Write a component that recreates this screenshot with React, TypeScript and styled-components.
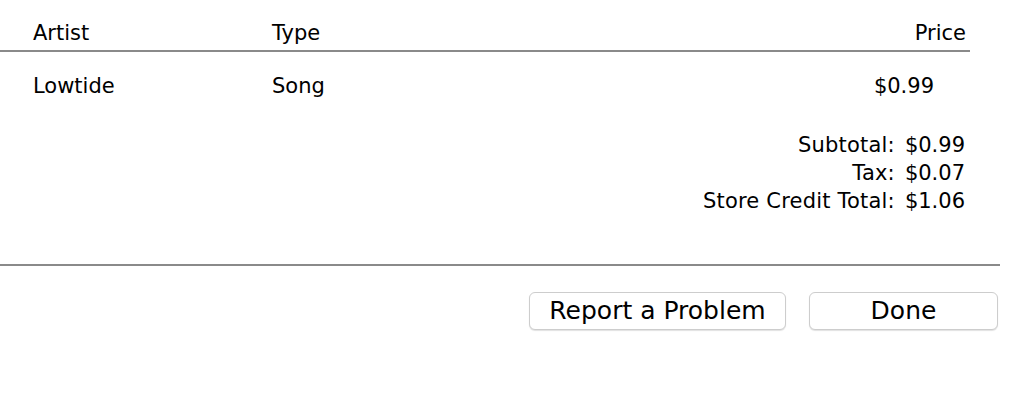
import React from "react";
import styled, { createGlobalStyle } from "styled-components";

const Global = createGlobalStyle`
  html, body { margin: 0; padding: 0; background: #ffffff; }
  body {
    font-family: "DejaVu Sans", "Verdana", sans-serif;
    color: #000000;
  }
`;

const Page = styled.div`
  width: 1026px;
  height: 400px;
  background: #ffffff;
  display: flex;
  flex-direction: column;
`;

const Table = styled.div`
  width: 970px;
  display: flex;
  flex-direction: column;
`;

const Row = styled.div<{ $header?: boolean }>`
  display: grid;
  grid-template-columns: 239px 1fr auto;
  padding: ${(p) => (p.$header ? "19px 4px 3px 33px" : "20px 4px 0 33px")};
  border-bottom: ${(p) => (p.$header ? "2px solid #8a8a8a" : "none")};
  font-size: 21px;
  line-height: 28px;
`;

const Cell = styled.div<{ $right?: boolean; $inset?: number }>`
  text-align: ${(p) => (p.$right ? "right" : "left")};
  padding-right: ${(p) => p.$inset ?? 0}px;
  white-space: nowrap;
`;

const Summary = styled.div`
  display: grid;
  grid-template-columns: 1fr auto;
  column-gap: 10px;
  justify-items: end;
  margin-top: 31px;
  padding-right: 5px;
  font-size: 21px;
  line-height: 28px;
`;

const SummaryLabel = styled.div`
  text-align: right;
  white-space: nowrap;
  letter-spacing: 0.2px;
`;

const SummaryValue = styled.div`
  text-align: left;
  white-space: nowrap;
`;

const Divider = styled.div`
  width: 1000px;
  height: 2px;
  background: #8a8a8a;
  margin-top: 49px;
`;

const ButtonBar = styled.div`
  width: 998px;
  display: flex;
  justify-content: flex-end;
  gap: 23px;
  margin-top: 26px;
`;

const Button = styled.button<{ $width: number }>`
  box-sizing: border-box;
  width: ${(p) => p.$width}px;
  height: 38px;
  padding: 0;
  background: #ffffff;
  border: 1px solid #cdcdcd;
  border-radius: 6px;
  box-shadow: 0 1px 1px rgba(0, 0, 0, 0.12);
  font-family: "DejaVu Sans", "Verdana", sans-serif;
  font-size: 25px;
  line-height: 36px;
  color: #000000;
  display: flex;
  align-items: center;
  justify-content: center;
  cursor: default;
`;

export default function App() {
  return (
    <Page>
      <Global />
      <Table>
        <Row $header>
          <Cell>Artist</Cell>
          <Cell>Type</Cell>
          <Cell $right>Price</Cell>
        </Row>
        <Row>
          <Cell>Lowtide</Cell>
          <Cell>Song</Cell>
          <Cell $right $inset={32}>$0.99</Cell>
        </Row>
        <Summary>
          <SummaryLabel>Subtotal:</SummaryLabel>
          <SummaryValue>$0.99</SummaryValue>
          <SummaryLabel>Tax:</SummaryLabel>
          <SummaryValue>$0.07</SummaryValue>
          <SummaryLabel>Store Credit Total:</SummaryLabel>
          <SummaryValue>$1.06</SummaryValue>
        </Summary>
      </Table>
      <Divider />
      <ButtonBar>
        <Button $width={257}>Report a Problem</Button>
        <Button $width={189}>Done</Button>
      </ButtonBar>
    </Page>
  );
}
